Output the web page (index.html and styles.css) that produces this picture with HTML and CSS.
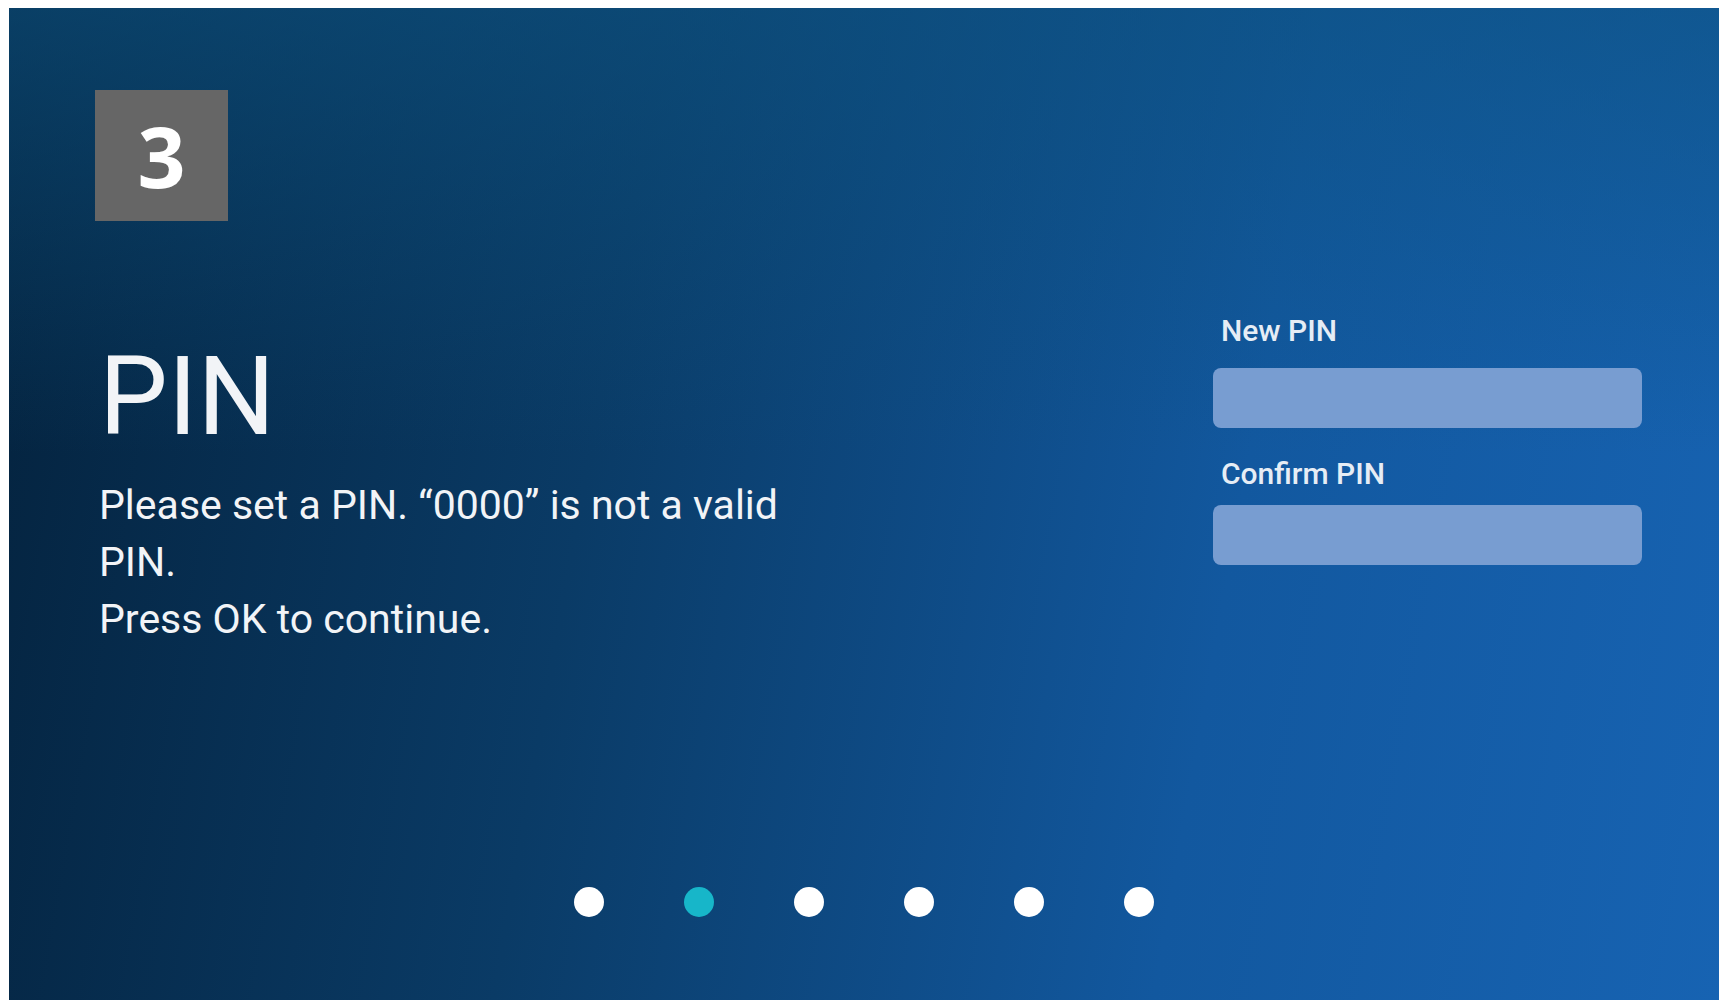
FILE: index.html
```html
<!DOCTYPE html>
<html lang="en">
<head>
  <meta charset="UTF-8" />
  <meta name="viewport" content="width=device-width, initial-scale=1" />
  <title>PIN setup</title>
  <link rel="stylesheet" href="styles.css">
</head>
<body>
  <div class="screen">
    <div class="step-badge">3</div>

    <div class="main">
      <div class="intro">
        <h1>PIN</h1>
        <p class="lead">Please set a PIN. “0000” is not a valid PIN.</p>
        <p>Press OK to continue.</p>
      </div>

      <form class="pin-form">
        <label for="newPin">New PIN</label>
        <input type="password" id="newPin" class="pin-new" />

        <label for="confirmPin" class="pin-confirm-label">Confirm PIN</label>
        <input type="password" id="confirmPin" />
      </form>
    </div>

    <div class="dots">
      <span class="dot"></span>
      <span class="dot active"></span>
      <span class="dot"></span>
      <span class="dot"></span>
      <span class="dot"></span>
      <span class="dot"></span>
    </div>
  </div>
</body>
</html>
```

FILE: styles.css
```css
body {
  margin: 0;
  background: #ffffff;
  font-family: Roboto, "Liberation Sans", sans-serif;
}
.screen {
  margin: 8px 0 0 9px;
  width: 1710px;
  height: 992px;
  box-sizing: border-box;
  padding: 82px 77px 83px 86px;
  display: flex;
  flex-direction: column;
  color: #f2f4f7;
  background:
    linear-gradient(to bottom, rgba(13,82,128,0.6) 0%, rgba(13,82,128,0) 45%),
    linear-gradient(100deg, #04223d 0%, #0a3b66 35%, #12589f 70%, #1763b2 100%);
}
.step-badge {
  width: 133px;
  height: 131px;
  background: #666666;
  color: #ffffff;
  font-family: "Open Sans", "Liberation Sans", sans-serif;
  font-weight: 700;
  font-size: 84px;
  line-height: 131px;
  text-align: center;
}
.main {
  margin-top: 92px;
  padding-left: 4px;
  display: flex;
  justify-content: space-between;
  align-items: flex-start;
}
.intro {
  width: 740px;
  padding-top: 30px;
}
h1 {
  margin: 0;
  font-size: 109px;
  font-weight: 400;
  line-height: 109px;
}
.intro p {
  margin: 0;
  font-size: 41px;
  line-height: 57px;
}
.intro .lead {
  margin-top: 25px;
}
.pin-form {
  width: 429px;
  display: flex;
  flex-direction: column;
}
label {
  padding-left: 8px;
  font-size: 30px;
  font-weight: 500;
  line-height: 36px;
  color: #e6edf5;
  margin-bottom: 19px;
}
.pin-confirm-label {
  margin-bottom: 13px;
}
input {
  height: 60px;
  border: none;
  border-radius: 8px;
  background: #789dd1;
  box-sizing: border-box;
}
.pin-new {
  margin-bottom: 28px;
}
.dots {
  margin-top: auto;
  display: flex;
  justify-content: center;
  gap: 80px;
  padding-right: 9px;
}
.dot {
  width: 30px;
  height: 30px;
  border-radius: 50%;
  background: #ffffff;
}
.dot.active {
  background: #17b6c9;
}
```
